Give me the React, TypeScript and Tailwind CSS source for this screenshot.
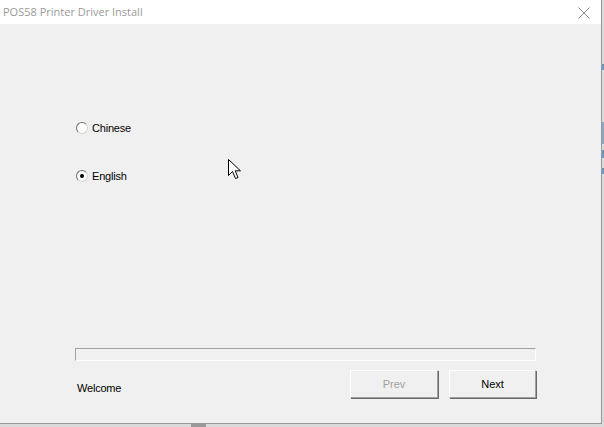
import React from 'react';

function Radio({ label, checked }: { label: string; checked?: boolean }) {
  return (
    <div className="flex items-center h-4">
      <span className="relative w-[12px] h-[12px] rounded-full bg-white border border-t-[#6e6e6e] border-l-[#6e6e6e] border-r-[#d4d4d4] border-b-[#d4d4d4] flex items-center justify-center">
        {checked && <span className="w-[4px] h-[4px] rounded-full bg-black" />}
      </span>
      <span className="ml-[4px] text-[11px] text-black tracking-[-0.2px]">{label}</span>
    </div>
  );
}

function Button({ label, disabled, w }: { label: string; disabled?: boolean; w: string }) {
  return (
    <button
      className={
        w +
        ' h-[28px] bg-[#f0f0f0] border border-t-white border-l-white border-r-[#a0a0a0] border-b-[#a0a0a0] shadow-[1px_1px_0_#696969] text-[11px] ' +
        (disabled ? 'text-[#a0a0a0]' : 'text-black')
      }
    >
      {label}
    </button>
  );
}

export default function App() {
  return (
    <div
      className="w-[604px] h-[427px] bg-[#dadada] relative overflow-hidden"
      style={{ fontFamily: '"Liberation Sans", Arial, sans-serif' }}
    >
      <div className="w-[602px] h-[424px] flex flex-col border-r border-b border-[#9a9a9a] bg-[#f0f0f0]">
        {/* title bar */}
        <div className="h-[24px] bg-white flex items-center justify-between pl-[3px] pr-[11px]">
          <span className="text-[11px] text-[#9a9a9a]" style={{ fontFamily: '"Open Sans", "Noto Sans", sans-serif' }}>
            POS58 Printer Driver Install
          </span>
          <svg width="12" height="12" viewBox="0 0 12 12" className="mt-[1px]">
            <path d="M0.5 0.5 L11.5 11.5 M11.5 0.5 L0.5 11.5" stroke="#8a8a8a" strokeWidth="1" />
          </svg>
        </div>

        {/* body */}
        <div className="flex-1 flex flex-col pl-[75px] pr-[64px]">
          <div className="mt-[96px] flex flex-col gap-[32px] pl-[1px]">
            <Radio label="Chinese" />
            <Radio label="English" checked />
          </div>

          <div className="mt-[164px] h-[13px] w-[461px] border border-t-[#a0a0a0] border-l-[#a0a0a0] border-r-white border-b-white bg-[#f0f0f0]" />

          <div className="mt-[9px] flex items-start">
            <span className="mt-[10px] ml-[2px] text-[11px] text-black tracking-[-0.2px]">Welcome</span>
            <div className="ml-auto mr-[1px] flex gap-[11px]">
              <Button label="Prev" disabled w="w-[88px]" />
              <Button label="Next" w="w-[87px]" />
            </div>
          </div>
        </div>
      </div>

      {/* desktop strips peeking through */}
      <div className="absolute right-0 top-[64px] w-[2px] h-[6px] bg-[#6a9ac8]" />
      <div className="absolute right-0 top-[122px] w-[2px] h-[22px] bg-[#8aa8c4]" />
      <div className="absolute right-0 top-[150px] w-[2px] h-[8px] bg-[#6a9ac8]" />
      <div className="absolute right-0 top-[168px] w-[2px] h-[6px] bg-[#6a9ac8]" />
      <div className="absolute left-[191px] bottom-0 w-[15px] h-[3px] bg-[#9a9a9a]" />

      {/* mouse cursor */}
      <svg className="absolute left-[228px] top-[159px]" width="14" height="22" viewBox="0 0 14 22">
        <path
          d="M0.5 0.5 L0.5 16.5 L4.5 12.5 L7.5 19.5 L10 18.5 L7.2 11.8 L12.5 11.8 Z"
          fill="white"
          stroke="black"
          strokeWidth="1"
          strokeLinejoin="miter"
        />
      </svg>
    </div>
  );
}
